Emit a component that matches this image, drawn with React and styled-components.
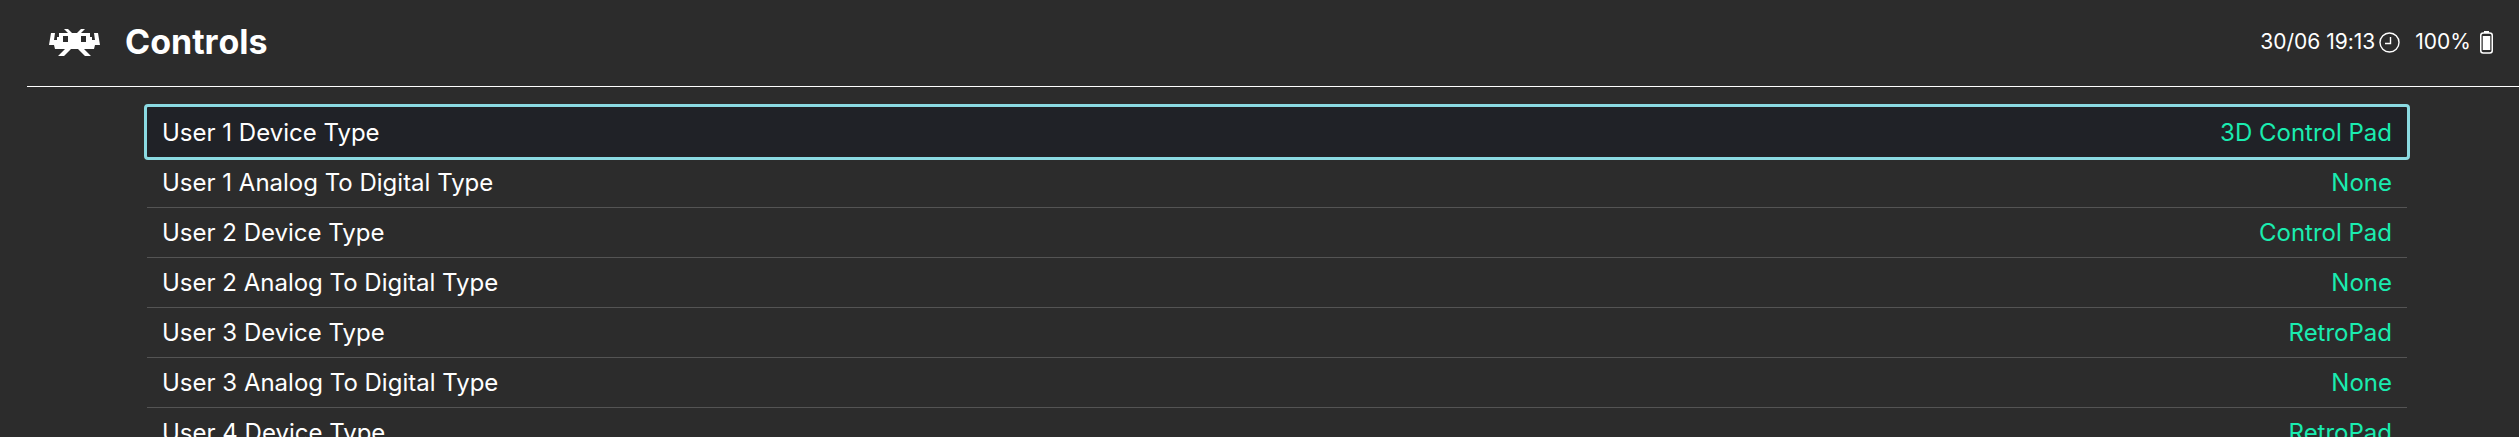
import React, { useState } from "react";
import styled, { createGlobalStyle } from "styled-components";

const GlobalStyle = createGlobalStyle`
  * {
    box-sizing: border-box;
  }

  body {
    margin: 0;
    background: #2c2c2c;
    font-family: Inter, "Liberation Sans", sans-serif;
    font-kerning: none;
    font-feature-settings: "calt" 0;
    color: #fff;
  }
`;

const Screen = styled.div`
  height: 100vh;
  overflow: hidden;
`;

const Header = styled.header`
  display: flex;
  align-items: center;
  height: 87px;
  margin-left: 27px;
  padding: 0 26px 2px 22px;
  border-bottom: 1px solid #fff;
`;

const Title = styled.h1`
  flex: 1;
  margin: 0 0 0 25px;
  font-size: 34px;
  line-height: 40px;
  font-weight: 700;
`;

const Status = styled.div`
  display: flex;
  align-items: center;
  font-size: 21px;
  line-height: 28px;
`;

const Clock = styled.div`
  display: flex;
  align-items: center;
  gap: 4px;
  margin-right: 15px;
`;

const Battery = styled.div`
  display: flex;
  align-items: center;
  gap: 9px;
`;

const Menu = styled.ul`
  margin: 20px 112px 0 147px;
  padding: 0;
  list-style: none;
`;

const Row = styled.button`
  display: flex;
  align-items: center;
  justify-content: space-between;
  width: 100%;
  height: 50px;
  padding: 0 15px;
  border: 0;
  border-top: 1px solid ${props => (props.$active ? "#202227" : "#545454")};
  border-radius: ${props => (props.$active ? "1px" : "0")};
  outline: ${props => (props.$active ? "3px solid #8bdae2" : "none")};
  background: ${props => (props.$active ? "#202227" : "transparent")};
  color: #fff;
  font-family: inherit;
  font-size: 24px;
  line-height: 30px;
  text-align: left;
`;

const Value = styled.span`
  color: #1aecb0;
`;

const settings = [
  { label: "User 1 Device Type", value: "3D Control Pad" },
  { label: "User 1 Analog To Digital Type", value: "None" },
  { label: "User 2 Device Type", value: "Control Pad" },
  { label: "User 2 Analog To Digital Type", value: "None" },
  { label: "User 3 Device Type", value: "RetroPad" },
  { label: "User 3 Analog To Digital Type", value: "None" },
  { label: "User 4 Device Type", value: "RetroPad" }
];

const Logo = () => (
  <svg width="51" height="27" viewBox="0 0 51 27" fill="#fff" aria-hidden="true">
    <path
      fillRule="evenodd"
      d="M15 0h4l4 4h5l4-4h4l-4 4h9v4h2v3h3l-1-7h4l2 12h-5l-1 4h-10l7 7h-6l-7-7h-7l-7 7h-6l7-7H6l-1-4H0L2 4h4L5 11h3V8h2V4h9zM14 7v6h5V7zM32 7v6h5V7z"
    />
  </svg>
);

const ClockIcon = () => (
  <svg width="21" height="21" viewBox="0 0 21 21" fill="none" stroke="#fff" aria-hidden="true">
    <circle cx="10.5" cy="10.5" r="9.5" strokeWidth="1.4" />
    <path d="M11.5 5v6.500H6" strokeWidth="1.4" />
  </svg>
);

const BatteryIcon = () => (
  <svg width="13" height="23" viewBox="0 0 13 23" aria-hidden="true">
    <path d="M4 2V0h5v2z" fill="#fff" />
    <rect x="0.750" y="2" width="11.500" height="20" rx="2.500" fill="none" stroke="#fff" strokeWidth="1.5" />
    <rect x="2.750" y="5" width="7.500" height="14" fill="#fff" />
  </svg>
);

const App = () => {
  const [selected, setSelected] = useState(0);

  return (
    <Screen>
      <GlobalStyle />
      <Header>
        <Logo />
        <Title>Controls</Title>
        <Status>
          <Clock>
            <span>30/06 19:13</span>
            <ClockIcon />
          </Clock>
          <Battery>
            <span>100%</span>
            <BatteryIcon />
          </Battery>
        </Status>
      </Header>
      <Menu>
        {settings.map((item, index) => (
          <li key={item.label}>
            <Row $active={index === selected} onClick={() => setSelected(index)}>
              <span>{item.label}</span>
              <Value>{item.value}</Value>
            </Row>
          </li>
        ))}
      </Menu>
    </Screen>
  );
};

export default App;
